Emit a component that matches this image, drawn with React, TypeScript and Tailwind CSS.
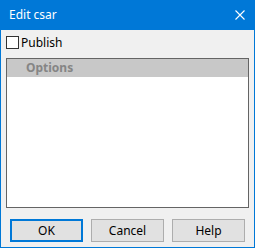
export default function App() {
  return (
    <div
      className="flex h-[248px] w-[255px] flex-col bg-[#f0f0f0] text-[12px] text-black"
      style={{ fontFamily: '"Noto Sans", "Open Sans", sans-serif' }}
    >
      {/* title bar */}
      <div className="flex h-[30px] shrink-0 items-center justify-between bg-[#0078d7] pl-[9px] pr-[10px] text-white">
        <span className="leading-none">Edit csar</span>
        <svg width="10" height="10" viewBox="0 0 10 10" className="mr-[0px]">
          <path d="M0.5 0.5 L9.5 9.5 M9.5 0.5 L0.5 9.5" stroke="white" strokeWidth="1.1" />
        </svg>
      </div>

      <div className="flex flex-1 flex-col border-x border-b border-[#0078d7] px-[5px] pt-[6px]">
        <label className="flex h-[13px] items-center gap-[2px]">
          <span className="h-[13px] w-[13px] border border-[#333333] bg-white" />
          <span className="leading-none">Publish</span>
        </label>

        <div className="mt-[9px] flex h-[150px] flex-col border border-[#646464] bg-white">
          <div className="flex h-[18px] items-center bg-[#c8c8c8] pl-[19px] text-[12px] font-bold leading-none text-[#858585]">
            Options
          </div>
        </div>

        <div className="mt-[11px] flex gap-[8px] px-[4px]">
          <button className="h-[23px] w-[73px] border-2 border-[#0078d7] bg-[#e1e1e1] leading-none">
            OK
          </button>
          <button className="h-[23px] w-[73px] border border-[#adadad] bg-[#e1e1e1] leading-none">
            Cancel
          </button>
          <button className="h-[23px] w-[73px] border border-[#adadad] bg-[#e1e1e1] leading-none">
            Help
          </button>
        </div>
      </div>
    </div>
  );
}
